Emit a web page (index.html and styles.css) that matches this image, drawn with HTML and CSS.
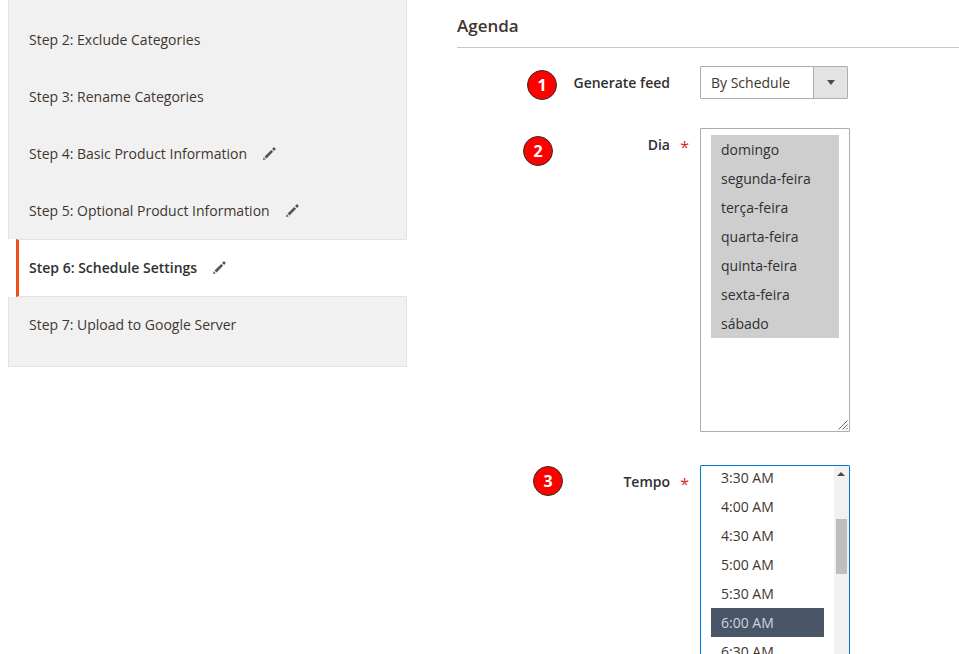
FILE: index.html
```html
<!DOCTYPE html>
<html lang="pt">
<head>
<meta charset="utf-8">
<title>Agenda</title>
<link rel="stylesheet" href="styles.css">
</head>
<body>
<div class="page">
  <nav class="steps">
    <div class="step step-first"><span>Step 2: Exclude Categories</span></div>
    <div class="step"><span>Step 3: Rename Categories</span></div>
    <div class="step"><span>Step 4: Basic Product Information</span><svg class="pencil" viewBox="0 0 14 14"><path d="M0 14l.8-3 2.200 2.200zM1.700 10.200L8.800 3.100l2.100 2.100-7.100 7.100zM9.800 2.100L11.300.6c.3-.3.7-.3 1 0l1.100 1.100c.3.3.3.7 0 1l-1.500 1.500z"/></svg></div>
    <div class="step"><span>Step 5: Optional Product Information</span><svg class="pencil" viewBox="0 0 14 14"><path d="M0 14l.8-3 2.200 2.200zM1.700 10.200L8.800 3.100l2.100 2.100-7.100 7.100zM9.800 2.100L11.300.6c.3-.3.7-.3 1 0l1.100 1.100c.3.3.3.7 0 1l-1.500 1.500z"/></svg></div>
    <div class="step step-active"><span>Step 6: Schedule Settings</span><svg class="pencil" viewBox="0 0 14 14"><path d="M0 14l.8-3 2.200 2.200zM1.700 10.200L8.800 3.100l2.100 2.100-7.100 7.100zM9.800 2.100L11.300.6c.3-.3.7-.3 1 0l1.100 1.100c.3.3.3.7 0 1l-1.500 1.500z"/></svg></div>
    <div class="step step-last"><span>Step 7: Upload to Google Server</span></div>
  </nav>
  <main class="content">
    <h2 class="section-title">Agenda</h2>
    <div class="field field-feed">
      <label class="field-label">Generate feed</label>
      <div class="dropdown">
        <span class="dropdown-value">By Schedule</span>
        <span class="dropdown-btn"><i class="arrow-down"></i></span>
      </div>
    </div>
    <div class="field field-day">
      <label class="field-label field-required">Dia</label>
      <div class="listbox listbox-days">
        <div class="option option-picked">domingo</div>
        <div class="option option-picked">segunda-feira</div>
        <div class="option option-picked">terça-feira</div>
        <div class="option option-picked">quarta-feira</div>
        <div class="option option-picked">quinta-feira</div>
        <div class="option option-picked">sexta-feira</div>
        <div class="option option-picked">sábado</div>
        <svg class="grip" viewBox="0 0 10 10"><path d="M9.500 .5L.5 9.500M9.500 4.500L4.500 9.500M9.500 8L8 9.500"/></svg>
      </div>
    </div>
    <div class="field field-time">
      <label class="field-label field-required">Tempo</label>
      <div class="listbox listbox-time">
        <div class="time-options">
          <div class="option">3:30 AM</div>
          <div class="option">4:00 AM</div>
          <div class="option">4:30 AM</div>
          <div class="option">5:00 AM</div>
          <div class="option">5:30 AM</div>
          <div class="option option-current">6:00 AM</div>
          <div class="option">6:30 AM</div>
        </div>
        <div class="scrollbar"><i class="arrow-up"></i><i class="thumb"></i></div>
      </div>
    </div>
  </main>
  <span class="badge badge-1">1</span>
  <span class="badge badge-2">2</span>
  <span class="badge badge-3">3</span>
</div>
</body>
</html>
```
FILE: styles.css
```css
* { box-sizing: border-box; }
html, body { margin: 0; height: 100%; overflow: hidden; background: #fff; }
body { font-family: "Open Sans", "Liberation Sans", sans-serif; font-size: 14px; color: #41362f; }
.page { position: relative; display: flex; height: 654px; overflow: hidden; }

.steps { width: 399px; margin-left: 8px; flex: none; }
.step {
  display: flex; align-items: center; height: 57px; padding-left: 20px;
  background: #f1f1f1; border-left: 1px solid #e3e3e3; border-right: 1px solid #e3e3e3;
  color: #41362f;
}
.step-first { height: 68px; padding-top: 11px; }
.step-last { height: 70px; padding-bottom: 15px; border-bottom: 1px solid #e3e3e3; }
.step-active {
  height: 58px; margin-left: 8px; padding-left: 10px; padding-bottom: 2px; background: #fff; font-weight: 600; color: #303030;
  border-left: 3px solid #f04e17; border-right: 0; border-top: 1px solid #e3e3e3; border-bottom: 1px solid #e3e3e3;
}
.pencil { width: 13px; height: 13px; margin-left: 16px; fill: #5a524c; flex: none; }

.content { flex: 1; margin-left: 50px; min-width: 0; }
.section-title {
  margin: 15px 0 0; height: 33px; font-size: 17px; line-height: 22px; font-weight: 600;
  color: #41362f; border-bottom: 1px solid #cac6c2;
}
.field { display: flex; }
.field-feed { margin-top: 18px; }
.field-day { margin-top: 29px; }
.field-time { margin-top: 33px; }
.field-label {
  width: 213px; padding-top: 7px; text-align: right; flex: none;
  font-weight: 600; color: #303030; line-height: 20px; position: relative;
}
.field-required::after {
  content: "*"; position: absolute; right: -19px; top: 9px; color: #e22626; font-size: 16px; font-weight: 400;
}

.dropdown {
  margin-left: 30px; display: flex; width: 148px; height: 33px;
  border: 1px solid #adadad; border-radius: 1px;
}
.dropdown-value { flex: 1; padding-left: 10px; line-height: 31px; color: #41362f; }
.dropdown-btn {
  width: 34px; display: flex; align-items: center; justify-content: center;
  background: #e3e3e3; border-left: 1px solid #adadad;
}
.arrow-down { width: 0; height: 0; border: 4px solid transparent; border-top: 5px solid #514943; border-bottom: 0; }

.listbox {
  margin-left: 30px; width: 150px; border: 1px solid #adadad; border-radius: 1px; position: relative; background: #fff;
}
.listbox-days { height: 304px; padding: 6px 10px; }
.listbox-time { height: 260px; display: flex; border-color: #007bdb; overflow: hidden; }
.option { height: 29px; line-height: 29px; padding-left: 10px; color: #41362f; }
.option-picked { background: #cecece; color: #303030; }
.option-current { background: #4a5568; color: #cdd3dc; }
.time-options { margin: -3px 0 0 10px; width: 113px; flex: none; }
.scrollbar { margin-left: 10px; width: 15px; background: #f1f1f1; position: relative; }
.arrow-up {
  position: absolute; left: 3px; top: 6px; width: 0; height: 0;
  border: 4px solid transparent; border-bottom: 4px solid #4a4a4a; border-top: 0;
}
.thumb { position: absolute; left: 2px; width: 11px; top: 53px; height: 55px; background: #bebebe; }
.grip { position: absolute; right: 1px; bottom: 1px; width: 10px; height: 10px; fill: none; stroke: #666; stroke-width: 1; }

.badge {
  position: absolute; width: 30px; height: 30px; border-radius: 50%;
  background: #f00; border: 1px solid #3a2a2a; color: #fff; font-weight: 700; font-size: 16px;
  line-height: 28px; text-align: center;
}
.badge-1 { left: 527px; top: 70px; }
.badge-2 { left: 523px; top: 136px; }
.badge-3 { left: 533px; top: 466px; }
```
